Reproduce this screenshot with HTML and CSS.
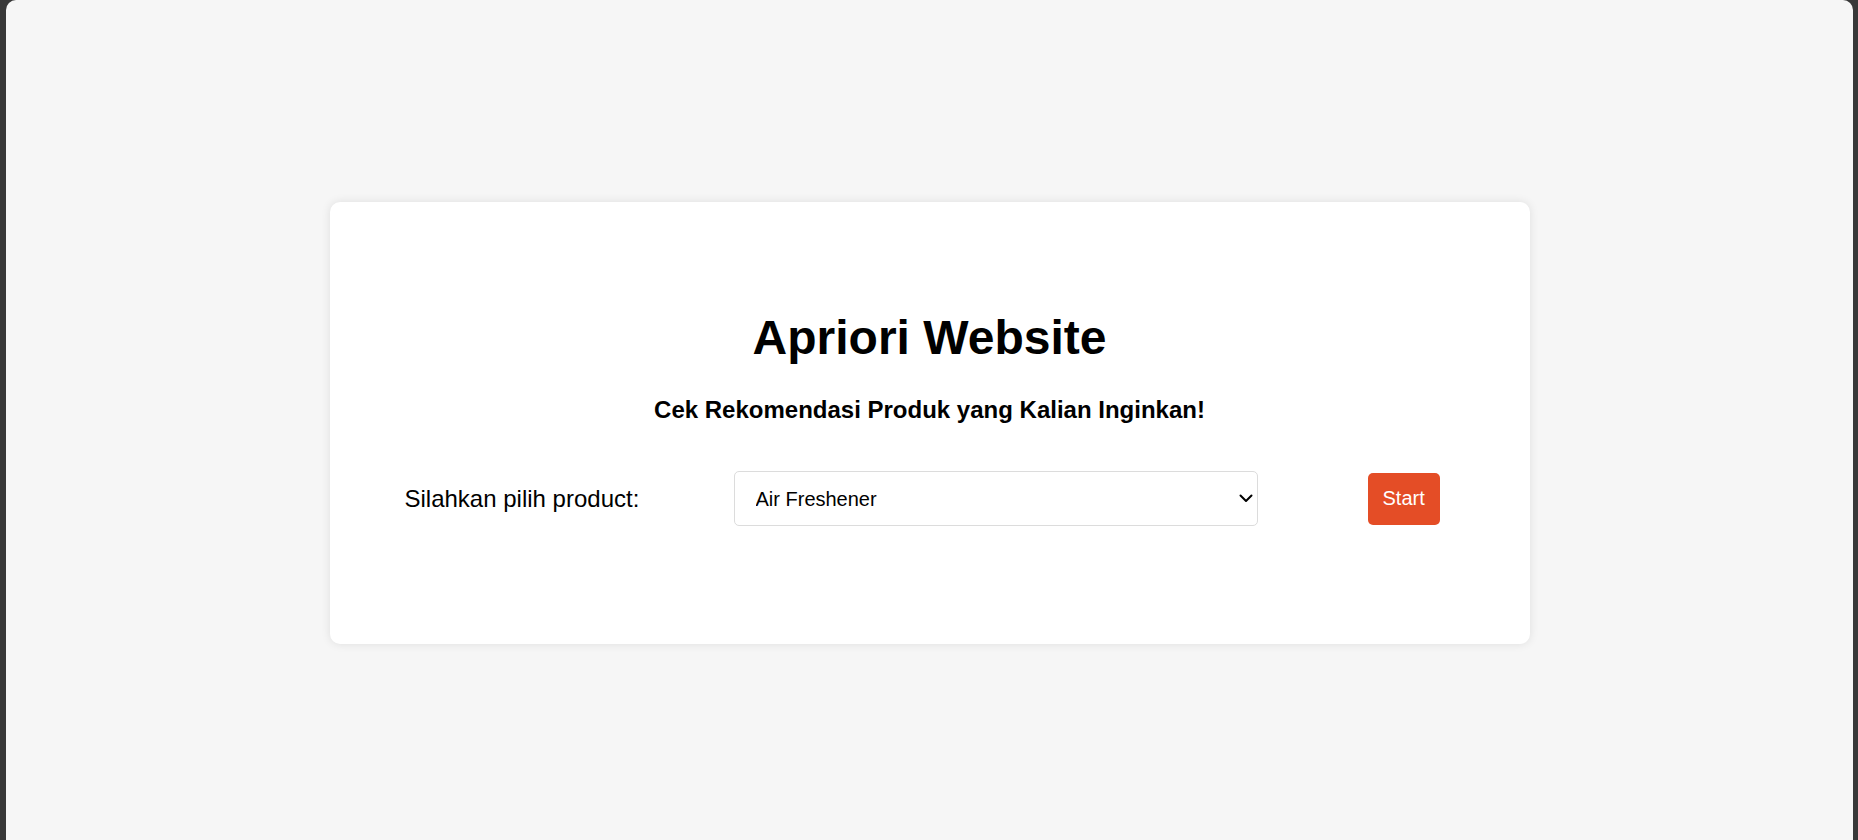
FILE: index.html
```html
<!DOCTYPE html>
<html lang="id">
<head>
<meta charset="utf-8">
<title>Apriori Website</title>
<link rel="stylesheet" href="styles.css">
</head>
<body>
<div class="window">
  <main class="card">
    <h1 class="title">Apriori Website</h1>
    <h3 class="subtitle">Cek Rekomendasi Produk yang Kalian Inginkan!</h3>
    <form class="row">
      <label class="label" for="product">Silahkan pilih product:</label>
      <div class="select-wrap">
        <select class="select" id="product" name="product">
          <option>Air Freshener</option>
          <option>Bread</option>
          <option>Coffee</option>
          <option>Milk</option>
        </select>
        <svg class="chevron" width="14" height="9" viewBox="0 0 14 9" aria-hidden="true">
          <path d="M1.5 1.5 L7 7 L12.5 1.5" fill="none" stroke="#000" stroke-width="2" stroke-linecap="round" stroke-linejoin="round"/>
        </svg>
      </div>
      <button class="btn" type="button">Start</button>
    </form>
  </main>
</div>
</body>
</html>
```

FILE: styles.css
```css
html, body {
  margin: 0;
  padding: 0;
  height: 100%;
}

body {
  background: #383838;
  font-family: "Liberation Sans", Arial, sans-serif;
  color: #000;
  overflow: hidden;
}

.window {
  margin: 0 5px 0 6px;
  height: 840px;
  background: #f6f6f6;
  border-radius: 10px 10px 0 0;
  display: flex;
  align-items: center;
  justify-content: center;
  padding-top: 6px;
  box-sizing: border-box;
}

.card {
  width: 1200px;
  box-sizing: border-box;
  background: #fff;
  border-radius: 10px;
  box-shadow: 0 0 10px rgba(0, 0, 0, 0.1);
  padding: 108px 0 118px;
  display: flex;
  flex-direction: column;
  align-items: center;
}

.title {
  margin: 0;
  font-size: 48px;
  font-weight: bold;
  line-height: 55px;
}

.subtitle {
  margin: 31px 0 0;
  font-size: 24px;
  font-weight: bold;
  line-height: 28px;
}

.row {
  margin-top: 47px;
  align-self: stretch;
  display: flex;
  align-items: center;
  padding-left: 75px;
}

.label {
  flex: 0 0 329px;
  font-size: 24px;
  line-height: 28px;
}

.select-wrap {
  position: relative;
  width: 524px;
  height: 55px;
}

.select {
  width: 100%;
  height: 100%;
  box-sizing: border-box;
  -webkit-appearance: none;
  appearance: none;
  border: 1px solid #dcdcdc;
  border-radius: 5px;
  background: #fff;
  padding: 0 30px 0 21px;
  font-family: "Liberation Sans", Arial, sans-serif;
  font-size: 20px;
  color: #000;
  outline: none;
}

.chevron {
  position: absolute;
  right: 5px;
  top: 23px;
  pointer-events: none;
}

.btn {
  margin-left: 110px;
  height: 52px;
  padding: 0 15px;
  border: none;
  border-radius: 5px;
  background: #e44d26;
  color: #fff;
  font-family: "Liberation Sans", Arial, sans-serif;
  font-size: 20px;
}
```
